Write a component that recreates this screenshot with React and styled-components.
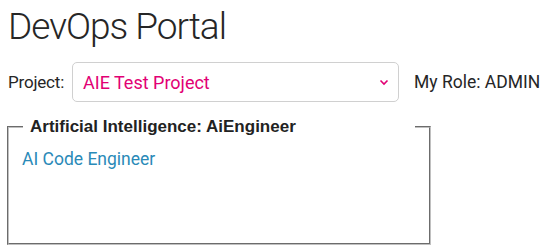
import React from "react";
import styled, { createGlobalStyle } from "styled-components";

const Global = createGlobalStyle`
  html, body { margin: 0; padding: 0; background: #fff; overflow: hidden; }
  body { padding: 0 8px; font-family: Roboto, "Liberation Sans", sans-serif; color: #262626; }
`;

const Title = styled.h1`
  margin: 0;
  padding-top: 5px;
  font-family: Roboto, sans-serif;
  font-weight: 300;
  font-size: 37px;
  line-height: 44px;
  color: #262626;
  letter-spacing: -1px;
`;

const Row = styled.div`
  display: flex;
  align-items: center;
  margin-top: 13px;
  height: 40px;
  & > * { flex-shrink: 0; }
`;

const Label = styled.span`
  font-size: 17px;
  color: #262626;
  width: 64px;
  letter-spacing: -0.2px;
`;

const SelectBox = styled.div`
  position: relative;
  width: 327px;
  height: 40px;
  box-sizing: border-box;
  border: 1px solid #d0d0d0;
  border-radius: 5px;
  display: flex;
  align-items: center;
  padding: 0 10px;
  color: #e20074;
  font-size: 18px;
`;

const Chevron = styled.svg`
  position: absolute;
  right: 9px;
  top: 16px;
`;

const Role = styled.span`
  margin-left: 15px;
  font-size: 17.5px;
  color: #262626;
  white-space: nowrap;
`;

const Group = styled.fieldset`
  margin: 15px 0 0 -1px;
  width: 424px;
  height: 128px;
  box-sizing: border-box;
  border: 2px groove #c0c0c0;
  padding: 0 14px;
`;

const Legend = styled.legend`
  width: 100%;
  box-sizing: border-box;
  font-family: "Liberation Sans", Arial, sans-serif;
  font-weight: bold;
  font-size: 17px;
  line-height: 20px;
  padding: 0 7px;
  color: #222;
`;

const Link = styled.a`
  display: inline-block;
  margin-top: 12px;
  margin-left: -1px;
  color: #2a8ab8;
  font-size: 17.5px;
  text-decoration: none;
`;

export default function App() {
  return (
    <>
      <Global />
      <Title>DevOps Portal</Title>
      <Row>
        <Label>Project:</Label>
        <SelectBox>
          AIE Test Project
          <Chevron width="10" height="7" viewBox="0 0 10 7">
            <path d="M1.5 1.5 L5 5 L8.5 1.5" fill="none" stroke="#e20074" strokeWidth="1.6" />
          </Chevron>
        </SelectBox>
        <Role>My Role: ADMIN</Role>
      </Row>
      <Group>
        <Legend>Artificial Intelligence: AiEngineer</Legend>
        <Link href="#">AI Code Engineer</Link>
      </Group>
    </>
  );
}
